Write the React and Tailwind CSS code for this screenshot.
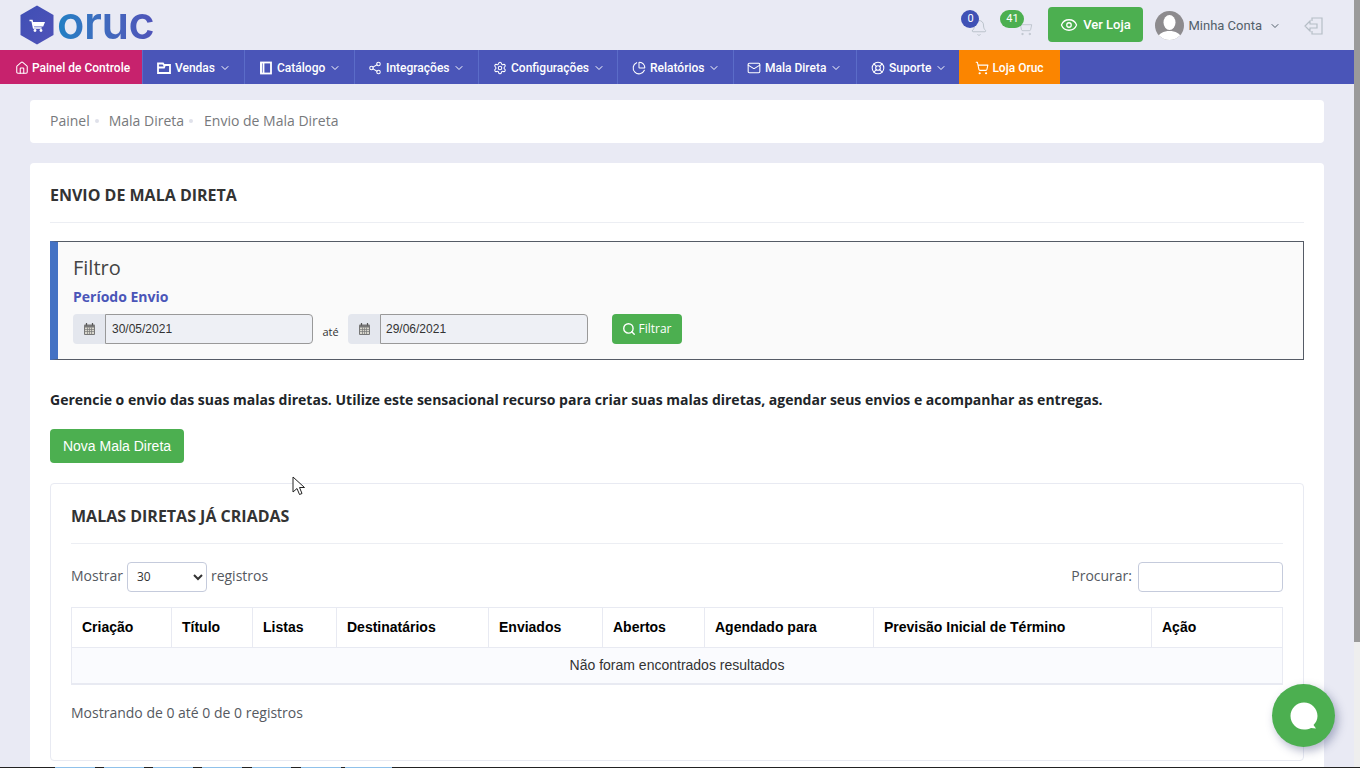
import React from "react";
import { Home, Share2, Settings, PieChart, Mail, LifeBuoy, ShoppingCart, ChevronDown, Eye, Bell, Search } from "lucide-react";

const Folder = (p) => (
  <svg width="14" height="14" viewBox="0 0 14 14" fill="none" stroke="currentColor" strokeWidth="1.2" {...p}>
    <path d="M1 4V2.500h5l1 1.500h6v8H1zM1 6.500h6l1-2.500" />
  </svg>
);
const Notebook = (p) => (
  <svg width="14" height="14" viewBox="0 0 14 14" fill="none" stroke="currentColor" strokeWidth="1.2" {...p}>
    <rect x="2" y="1.500" width="10" height="11" />
    <path d="M4.500 1.500v11" />
    <path d="M2 1.500v11" strokeWidth="1.800" />
  </svg>
);

const nav = [
  { label: "Vendas", icon: Folder, w: "w-[102px]", pad: "pl-[14px]" },
  { label: "Catálogo", icon: Notebook, w: "w-[110px]", pad: "pl-[14px]" },
  { label: "Integrações", icon: Share2, w: "w-[124px]", pad: "pl-[13px]" },
  { label: "Configurações", icon: Settings, w: "w-[139px]", pad: "pl-[14px]" },
  { label: "Relatórios", icon: PieChart, w: "w-[116px]", pad: "pl-[14px]" },
  { label: "Mala Direta", icon: Mail, w: "w-[123px]", pad: "pl-[13px]" },
  { label: "Suporte", icon: LifeBuoy, w: "w-[103px]", pad: "pl-[14px]" },
];

const cols = [
  ["Criação", "w-[100px]"],
  ["Título", "w-[81px]"],
  ["Listas", "w-[84px]"],
  ["Destinatários", "w-[152px]"],
  ["Enviados", "w-[114px]"],
  ["Abertos", "w-[102px]"],
  ["Agendado para", "w-[169px]"],
  ["Previsão Inicial de Término", "w-[278px]"],
  ["Ação", "flex-1"],
];

const strip = [[55, 40], [104, 40], [153, 40], [202, 40], [252, 39], [301, 40], [345, 47]];

function CalendarIcon() {
  return (
    <svg width="11" height="12" viewBox="0 0 11 12">
      <rect x="0" y="1.500" width="11" height="10.500" fill="#777" rx="1" />
      <path d="M1 4.500h9v6.500H1z" fill="#d8d6cc" />
      <path d="M1 6.500h9M1 8.500h9M3.500 4.500v6.500M5.500 4.500v6.500M7.500 4.500v6.500" stroke="#777" strokeWidth="0.700" />
      <path d="M2.500 0v2.500M8.500 0v2.500" stroke="#555" strokeWidth="1.200" />
    </svg>
  );
}

function DateField({ value, pad }) {
  return (
    <div className="flex h-[30px]">
      <div className="w-[32px] bg-[#e4e7ee] rounded-l flex items-center justify-center">
        <CalendarIcon />
      </div>
      <div className={`w-[208px] ${pad} bg-[#eef0f5] border border-[#999] rounded-r flex items-center text-[12px] text-[#333] font-['Liberation_Sans',sans-serif]`}>
        {value}
      </div>
    </div>
  );
}

export default function App() {
  return (
    <div className="relative flex h-screen overflow-hidden bg-[#e9eaf4] font-['Open_Sans',sans-serif]">
      <div className="flex-1 min-w-0 flex flex-col">
        <header className="h-[50px] flex items-center shrink-0 pr-[30px]">
          <div className="flex items-center ml-[20px]">
            <svg width="34" height="40" viewBox="0 0 34 40" className="shrink-0">
              <defs>
                <linearGradient id="hx" x1="0" y1="0" x2="1" y2="1">
                  <stop offset="0" stopColor="#3f4fb5" />
                  <stop offset="1" stopColor="#4f52b8" />
                </linearGradient>
              </defs>
              <path d="M17 0.500 L33.500 10 V30 L17 39.500 L0.500 30 V10 Z" fill="url(#hx)" />
              <path d="M9.500 15.500h2.500l1.600 7.500h8" fill="none" stroke="#fff" strokeWidth="1.500" />
              <path d="M12.500 17h12.500l-1.800 4.500H13.500z" fill="#fff" />
              <circle cx="15" cy="25.500" r="1.400" fill="#fff" />
              <circle cx="21" cy="25.500" r="1.400" fill="#fff" />
            </svg>
            <span className="ml-[3px] mb-[5px] text-[45px] leading-[44px] font-semibold tracking-[-0.4px] pr-[2px] text-transparent bg-clip-text bg-gradient-to-r from-[#1f80c4] to-[#4f52b8] font-['Inter',sans-serif] lowercase">oruc</span>
          </div>
          <div className="ml-auto flex items-center">
            <div className="relative w-[39px] h-[40px]">
              <Bell size={18} strokeWidth={1.2} className="absolute left-[9px] top-[14px] text-[#b6bec6]" />
              <span className="absolute left-0 top-[5px] w-[18px] h-[18px] rounded-full bg-[#3f51b5] text-white text-[11px] flex items-center justify-center font-['Roboto',sans-serif]">0</span>
            </div>
            <div className="relative w-[48px] h-[40px]">
              <ShoppingCart size={16} strokeWidth={1.2} className="absolute left-[17px] top-[15px] text-[#b6bec6]" />
              <span className="absolute left-0 top-[5px] w-[24px] h-[18px] rounded-[9px] bg-[#4caf50] text-white text-[11px] flex items-center justify-center font-['Roboto',sans-serif]">41</span>
            </div>
            <div className="w-[95px] h-[35px] mb-[1px] rounded bg-[#4caf50] text-white text-[13px] font-medium flex items-center justify-center gap-[5px] pr-[1px] font-['Roboto',sans-serif]">
              <Eye size={18} strokeWidth={1.7} />
              Ver Loja
            </div>
            <div className="ml-[12px] mt-[1px] w-[29px] h-[29px] rounded-full bg-[#8d8b8e] overflow-hidden flex items-center justify-center">
              <svg width="29" height="29" viewBox="0 0 29 29">
                <ellipse cx="14.500" cy="11.500" rx="6" ry="7.500" fill="#fff" />
                <path d="M2 29c1-7 7-9 12.500-9S26 22 27 29z" fill="#fff" />
              </svg>
            </div>
            <span className="ml-[4px] mt-[1px] text-[13px] text-[#53606a] font-['Roboto',sans-serif]">Minha Conta</span>
            <ChevronDown size={12} className="ml-[7px] mt-[1px] text-[#53606a]" />
            <svg width="20" height="20" viewBox="0 0 20 20" fill="none" stroke="#b6bec6" strokeWidth="1.200" className="ml-[23px] mt-[2px]">
              <path d="M8 5V2h10v16H8v-3" />
              <path d="M13 8H6V5l-5 5 5 5v-3h7z" />
            </svg>
          </div>
        </header>
        <nav className="h-[34px] shrink-0 flex bg-[#4a55b8] text-white text-[12px] font-medium font-['Roboto',sans-serif]">
          <div className="w-[142px] bg-[#c7226d] flex items-center pl-[15px] pt-[1px] gap-[3px]">
            <Home size={14} strokeWidth={1.8} />
            Painel de Controle
          </div>
          {nav.map(({ label, icon: Icon, w, pad }) => (
            <div key={label} className={`${w} ${pad} border-l border-[#5b6cc8] flex items-center pt-[1px] gap-[4px]`}>
              <Icon size={14} strokeWidth={1.8} />
              {label}
              <ChevronDown size={12} />
            </div>
          ))}
          <div className="w-[101px] bg-[#fb8500] flex items-center justify-center pt-[1px] gap-[3px]">
            <ShoppingCart size={14} strokeWidth={1.8} />
            Loja Oruc
          </div>
        </nav>
        <main className="flex-1 min-h-0 pl-[30px] pr-[30px] pt-[16px]">
          <div className="h-[43px] bg-white rounded flex items-center pl-[20px] pb-[2px] text-[14px] text-[#77797c]">
            <span>Painel</span>
            <span className="mx-[5px] w-[4px] h-[4px] rounded-full bg-[#dfe1ea]" />
            <span className="ml-[5px]">Mala Direta</span>
            <span className="mx-[5px] w-[4px] h-[4px] rounded-full bg-[#dfe1ea]" />
            <span className="ml-[6px]">Envio de Mala Direta</span>
          </div>
          <section className="mt-[20px] bg-white rounded px-[20px] pt-[20px] pb-[40px]">
            <h1 className="text-[16px] leading-[24px] font-bold text-[#333] pb-[15px] border-b border-[#eceef3]">ENVIO DE MALA DIRETA</h1>
            <div className="mt-[18px] h-[119px] bg-[#fafafa] border border-[#555b66] border-l-[8px] border-l-[#4472c4] pl-[15px] pt-[13px]">
              <div className="text-[20px] leading-[26px] text-[#444]">Filtro</div>
              <div className="mt-[6px] text-[14px] leading-[20px] font-bold text-[#4a55b8]">Período Envio</div>
              <div className="mt-[7px] flex items-center">
                <DateField value="30/05/2021" pad="pl-[6px]" />
                <span className="w-[35px] text-center text-[11px] text-[#333] pt-[6px]">até</span>
                <DateField value="29/06/2021" pad="pl-[5px]" />
                <div className="ml-[24px] w-[70px] h-[30px] rounded-sm bg-[#4caf50] text-white text-[12px] flex items-center justify-center gap-[2px]">
                  <Search size={14} strokeWidth={2.4} />
                  Filtrar
                </div>
              </div>
            </div>
            <p className="mt-[30px] text-[14px] leading-[20px] font-bold text-[#212529]">Gerencie o envio das suas malas diretas. Utilize este sensacional recurso para criar suas malas diretas, agendar seus envios e acompanhar as entregas.</p>
            <div className="mt-[19px] w-[134px] h-[34px] rounded bg-[#4caf50] text-white text-[14px] flex items-center justify-center font-['Liberation_Sans',sans-serif]">Nova Mala Direta</div>
            <div className="mt-[20px] h-[278px] border border-[#e8eaf2] rounded px-[20px] pt-[20px]">
              <h2 className="text-[16px] leading-[24px] font-bold text-[#333] pb-[15px] border-b border-[#eceef3]">MALAS DIRETAS JÁ CRIADAS</h2>
              <div className="mt-[18px] flex items-center justify-between h-[30px] text-[14px] text-[#55595f]">
                <div className="flex items-center">
                  <span className="pb-[3px]">Mostrar</span>
                  <select defaultValue="30" className="ml-[4px] mr-[4px] w-[80px] h-[30px] border border-[#c5cbdc] rounded bg-white text-[12px] text-[#333] pl-[5px] pb-[2px]">
                    <option>30</option>
                  </select>
                  <span className="pb-[3px]">registros</span>
                </div>
                <div className="flex items-center">
                  <span className="pb-[3px]">Procurar:</span>
                  <input className="ml-[6px] w-[145px] h-[30px] border border-[#c5cbdc] rounded bg-white" />
                </div>
              </div>
              <div className="mt-[15px] border border-[#e8eaf2] border-b-[2px] font-['Liberation_Sans',sans-serif]">
                <div className="flex h-[40px] border-b border-[#e8eaf2]">
                  {cols.map(([c, w], i) => (
                    <div key={c} className={`${w} ${i < cols.length - 1 ? "border-r border-[#e8eaf2]" : ""} px-[10px] flex items-center text-[14px] font-bold text-black`}>{c}</div>
                  ))}
                </div>
                <div className="h-[35px] bg-[#fafbfe] flex items-center justify-center text-[14px] text-[#333]">Não foram encontrados resultados</div>
              </div>
              <div className="mt-[18px] text-[14px] leading-[20px] text-[#55595f]">Mostrando de 0 até 0 de 0 registros</div>
            </div>
          </section>
        </main>
      </div>
      <div className="w-[6px] shrink-0 flex flex-col bg-[#eeeeee]">
        <div className="h-[642px] bg-[#9a9a9a]" />
      </div>
      <div className="absolute left-[1272px] top-[684px] w-[63px] h-[63px] rounded-full bg-[#4caf50] shadow-[3px_4px_10px_rgba(60,70,120,0.4)] flex items-center justify-center">
        <svg width="30" height="30" viewBox="0 0 30 30">
          <path d="M15 1.500C7.500 1.500 1.500 7.500 1.500 15S7.500 28.500 15 28.500c2.500 0 5-.4 7-1.500l5 .5-2.500-3.500c2.500-2.500 4-5.500 4-9C28.500 7.500 22.500 1.500 15 1.500z" fill="#fff" />
        </svg>
      </div>
      <svg width="14" height="21" viewBox="0 0 14 21" className="absolute left-[292px] top-[476px]">
        <path d="M1 1v15l4-3.500 2.500 6 2.500-1-2.500-6h5z" fill="#fff" stroke="#222" strokeWidth="1" />
      </svg>
      <div className="absolute left-0 right-0 bottom-0 h-px bg-[#222]">
        {strip.map(([x, w]) => (
          <div key={x} className="absolute top-0 h-px bg-[#8fc1ea]" style={{ left: x, width: w }} />
        ))}
      </div>
    </div>
  );
}
